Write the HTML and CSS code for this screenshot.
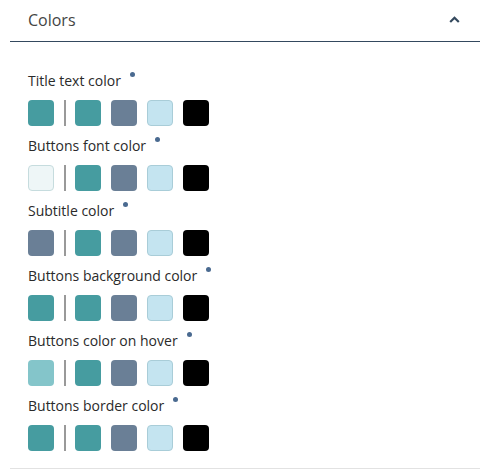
FILE: index.html
```html
<!DOCTYPE html>
<html>
<head>
<meta charset="utf-8">
<link rel="stylesheet" href="styles.css">
</head>
<body>
<div class="panel">
  <div class="panel-header">
    <span class="panel-title">Colors</span>
    <svg class="chevron" width="11" height="7" viewBox="0 0 11 7"><path d="M1.2 6 L5.5 1.7 L9.8 6" fill="none" stroke="#34495e" stroke-width="2.2"/></svg>
  </div>
  <div class="panel-body">
    <div class="field">
      <div class="label">Title text color<span class="dot"></span></div>
      <div class="swatches">
        <span class="sw teal"></span><span class="sep"></span>
        <span class="sw teal"></span><span class="sw slate"></span><span class="sw light"></span><span class="sw black"></span>
      </div>
    </div>
    <div class="field">
      <div class="label">Buttons font color<span class="dot"></span></div>
      <div class="swatches">
        <span class="sw pale"></span><span class="sep"></span>
        <span class="sw teal"></span><span class="sw slate"></span><span class="sw light"></span><span class="sw black"></span>
      </div>
    </div>
    <div class="field">
      <div class="label">Subtitle color<span class="dot"></span></div>
      <div class="swatches">
        <span class="sw slate"></span><span class="sep"></span>
        <span class="sw teal"></span><span class="sw slate"></span><span class="sw light"></span><span class="sw black"></span>
      </div>
    </div>
    <div class="field">
      <div class="label">Buttons background color<span class="dot"></span></div>
      <div class="swatches">
        <span class="sw teal"></span><span class="sep"></span>
        <span class="sw teal"></span><span class="sw slate"></span><span class="sw light"></span><span class="sw black"></span>
      </div>
    </div>
    <div class="field">
      <div class="label">Buttons color on hover<span class="dot"></span></div>
      <div class="swatches">
        <span class="sw hover"></span><span class="sep"></span>
        <span class="sw teal"></span><span class="sw slate"></span><span class="sw light"></span><span class="sw black"></span>
      </div>
    </div>
    <div class="field">
      <div class="label">Buttons border color<span class="dot"></span></div>
      <div class="swatches">
        <span class="sw teal"></span><span class="sep"></span>
        <span class="sw teal"></span><span class="sw slate"></span><span class="sw light"></span><span class="sw black"></span>
      </div>
    </div>
  </div>
</div>
</body>
</html>
```
FILE: styles.css
```css
html, body {
  margin: 0;
  padding: 0;
  background: #fff;
  font-family: "Open Sans", "Liberation Sans", sans-serif;
}
.panel {
  width: 470px;
  margin-left: 10px;
  border-bottom: 1px solid #e2e2e2;
}
.panel-header {
  height: 41px;
  border-bottom: 1px solid #34495e;
  display: flex;
  align-items: center;
  justify-content: space-between;
  padding: 0 20px 0 18px;
}
.panel-title {
  font-size: 16px;
  color: #444;
  margin-top: -2px;
}
.chevron {
  margin-top: -3px;
}
.panel-body {
  padding: 30px 18px 17px;
  display: flex;
  flex-direction: column;
  gap: 11px;
}
.field {
  display: flex;
  flex-direction: column;
  gap: 10px;
}
.label {
  font-size: 14px;
  font-weight: 500;
  color: #2a2a2a;
  line-height: 18px;
}
.dot {
  display: inline-block;
  width: 5px;
  height: 5px;
  border-radius: 50%;
  background: #4a6a90;
  margin-left: 9px;
  vertical-align: 9px;
}
.swatches {
  display: flex;
  align-items: center;
  height: 26px;
}
.sw {
  width: 26px;
  height: 26px;
  box-sizing: border-box;
  border-radius: 4px;
  margin-right: 10px;
}
.sw:last-child { margin-right: 0; }
.sep {
  width: 2px;
  height: 26px;
  background: #999;
  margin-right: 9px;
}
.teal { background: #469ca0; }
.slate { background: #6a7f96; }
.light { background: #c4e4f0; border: 1px solid #a9cdd8; }
.black { background: #000; }
.pale { background: #eef6f7; border: 1px solid #c6dcde; }
.hover { background: #84c5ca; }
```
